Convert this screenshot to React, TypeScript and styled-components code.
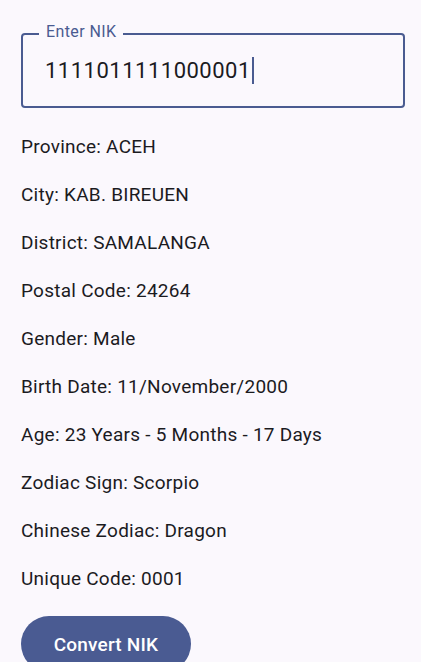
import React from "react";
import styled, { createGlobalStyle } from "styled-components";

const GlobalStyle = createGlobalStyle`
  html, body {
    margin: 0;
    padding: 0;
    background: #fbf8fd;
  }
  body {
    font-family: Roboto, "Noto Sans", "Liberation Sans", sans-serif;
    color: #1b1b1f;
  }
  * { box-sizing: border-box; }
`;

const Screen = styled.div`
  width: 421px;
  height: 662px;
  overflow: hidden;
  padding: 33px 16px 0 21px;
  display: flex;
  flex-direction: column;
  align-items: flex-start;
  & > * { flex-shrink: 0; }
`;

const Field = styled.div`
  position: relative;
  width: 384px;
  height: 75px;
  border: 2px solid #4a5b91;
  border-radius: 4px;
  display: flex;
  align-items: center;
  padding-left: 22px;
`;

const FieldLabel = styled.span`
  position: absolute;
  top: -13px;
  left: 16px;
  padding: 0 7px;
  background: #fbf8fd;
  color: #4a5b91;
  font-size: 16px;
  line-height: 20px;
  letter-spacing: 0.4px;
`;

const FieldValue = styled.span`
  font-size: 22px;
  line-height: 28px;
  letter-spacing: 0.5px;
  color: #1b1b1f;
  display: flex;
  align-items: center;
`;

const Caret = styled.span`
  display: inline-block;
  width: 2px;
  height: 27px;
  margin-left: 1px;
  background: #4a5b91;
`;

const InfoList = styled.div`
  margin-top: 14px;
  display: flex;
  flex-direction: column;
`;

const InfoRow = styled.div`
  height: 48px;
  display: flex;
  align-items: center;
  font-size: 19px;
  letter-spacing: 0.25px;
  color: #1b1b1f;
`;

const PrimaryButton = styled.button`
  margin-top: 14px;
  width: 170px;
  height: 56px;
  border: none;
  border-radius: 28px;
  background: #4a5b92;
  color: #ffffff;
  font-family: Roboto, "Noto Sans", "Liberation Sans", sans-serif;
  font-size: 19px;
  font-weight: 500;
  letter-spacing: 0.2px;
  padding: 0;
`;

const rows = [
  "Province: ACEH",
  "City: KAB. BIREUEN",
  "District: SAMALANGA",
  "Postal Code: 24264",
  "Gender: Male",
  "Birth Date: 11/November/2000",
  "Age: 23 Years - 5 Months - 17 Days",
  "Zodiac Sign: Scorpio",
  "Chinese Zodiac: Dragon",
  "Unique Code: 0001",
];

export default function App() {
  return (
    <>
      <GlobalStyle />
      <Screen>
        <Field>
          <FieldLabel>Enter NIK</FieldLabel>
          <FieldValue>
            1111011111000001
            <Caret />
          </FieldValue>
        </Field>
        <InfoList>
          {rows.map((r) => (
            <InfoRow key={r}>{r}</InfoRow>
          ))}
        </InfoList>
        <PrimaryButton>Convert NIK</PrimaryButton>
      </Screen>
    </>
  );
}
